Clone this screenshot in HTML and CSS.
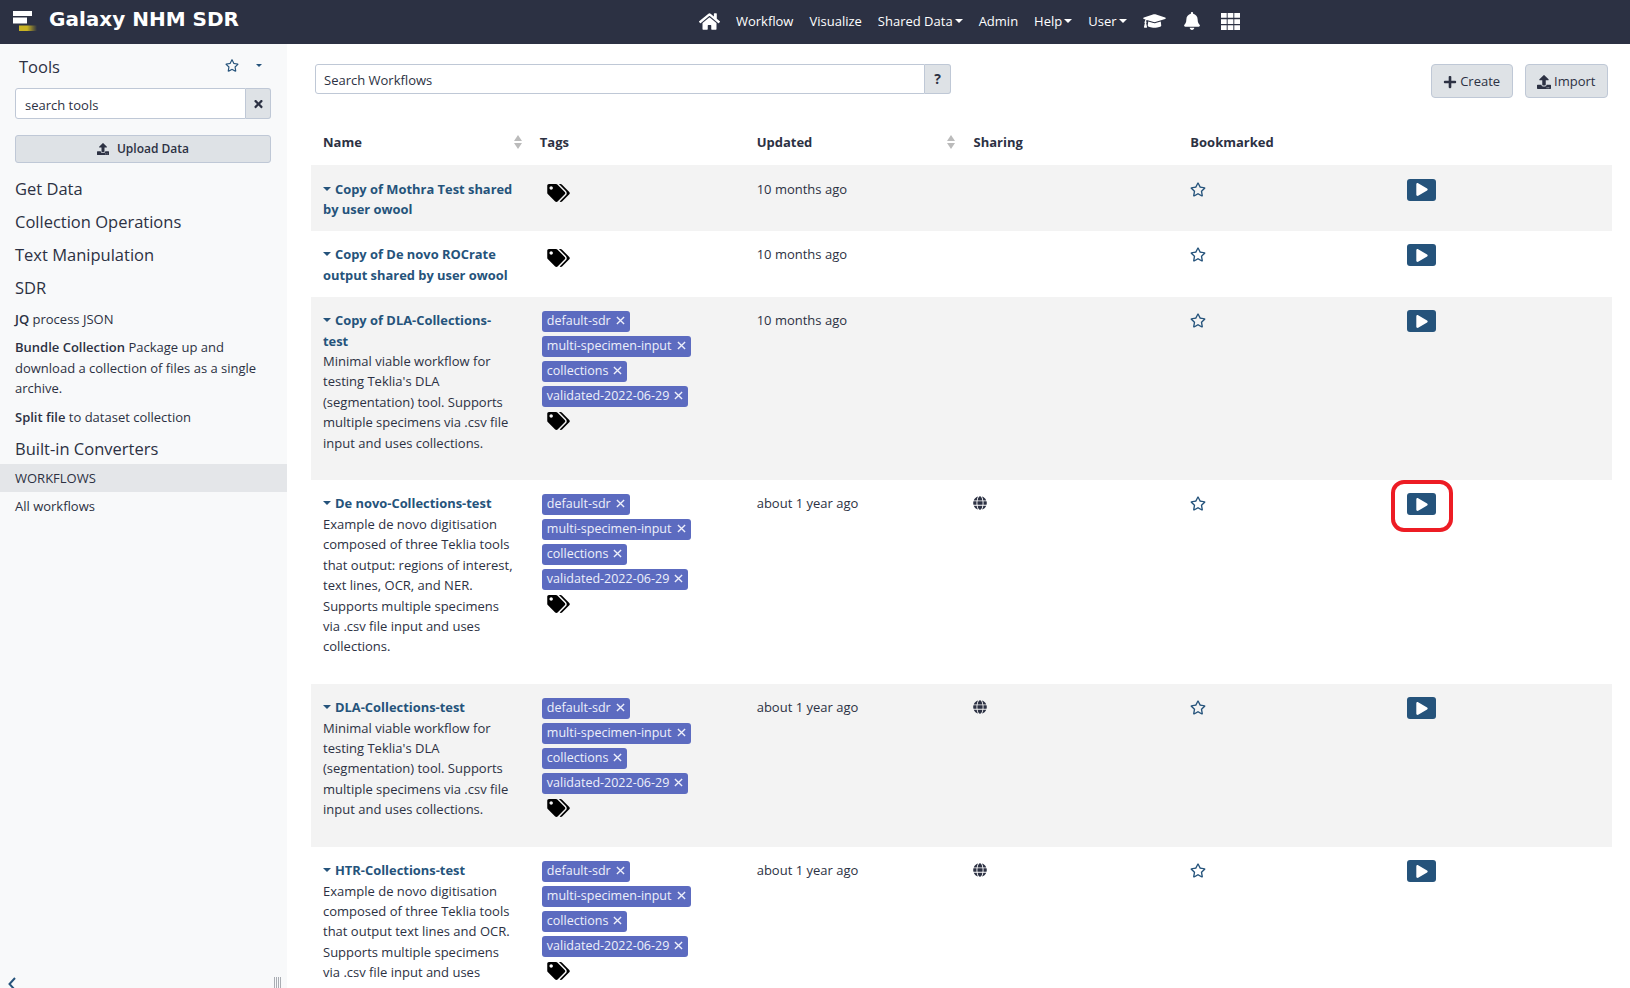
FILE: index.html
```html
<!DOCTYPE html>
<html lang="en">
<head>
    <meta charset="UTF-8">
    <title>Galaxy NHM SDR</title>
    <link rel="stylesheet" href="styles.css">
</head>
<body>

<!-- icon sprite -->
<svg class="sprite" xmlns="http://www.w3.org/2000/svg">
    <symbol id="i-star" viewBox="0 0 576 512"><path d="M528.1 171.5L382 150.2 316.7 17.8c-11.7-23.6-45.6-23.9-57.4 0L194 150.2 47.9 171.5c-26.2 3.8-36.7 36.1-17.7 54.6l105.7 103-25 145.5c-4.5 26.3 23.2 46 46.4 33.7L288 439.6l130.7 68.7c23.2 12.2 50.9-7.4 46.4-33.7l-25-145.5 105.7-103c19-18.5 8.5-50.8-17.7-54.6zM388.6 312.3l23.7 138.4L288 385.4l-124.3 65.3 23.7-138.4-100.6-98 139-20.2 62.2-126 62.2 126 139 20.2-100.6 98z"/></symbol>
    <symbol id="i-tags" viewBox="0 0 640 512"><path d="M497.941 225.941L286.059 14.059A48 48 0 0 0 252.118 0H48C21.49 0 0 21.49 0 48v204.118a48 48 0 0 0 14.059 33.941l211.882 211.882c18.744 18.745 49.136 18.746 67.882 0l204.118-204.118c18.745-18.745 18.745-49.137 0-67.882zM112 160c-26.51 0-48-21.49-48-48s21.49-48 48-48 48 21.49 48 48-21.49 48-48 48zm513.941 133.823L421.823 497.941c-18.745 18.745-49.137 18.745-67.882 0l-.36-.36L527.64 323.522c16.999-16.999 26.36-39.6 26.36-63.64s-9.362-46.641-26.36-63.64L331.397 0h48.721a48 48 0 0 1 33.941 14.059l211.882 211.882c18.745 18.745 18.745 49.137 0 67.882z"/></symbol>
    <symbol id="i-play" viewBox="0 0 448 512"><path d="M424.4 214.7L72.4 6.6C43.8-10.3 0 6.1 0 47.9V464c0 37.5 40.7 60.1 72.4 41.3l352-208c31.4-18.5 31.5-64.1 0-82.6z"/></symbol>
    <symbol id="i-upload" viewBox="0 0 512 512"><path d="M296 384h-80c-13.3 0-24-10.7-24-24V192h-87.7c-17.8 0-26.7-21.5-14.1-34.1L242.3 5.7c7.5-7.5 19.8-7.5 27.3 0l152.2 152.2c12.6 12.6 3.7 34.1-14.1 34.1H320v168c0 13.3-10.7 24-24 24zm216-8v112c0 13.3-10.7 24-24 24H24c-13.3 0-24-10.7-24-24V376c0-13.3 10.7-24 24-24h136v8c0 30.9 25.1 56 56 56h80c30.9 0 56-25.1 56-56v-8h136c13.3 0 24 10.7 24 24zm-124 88c0-11-9-20-20-20s-20 9-20 20 9 20 20 20 20-9 20-20zm64 0c0-11-9-20-20-20s-20 9-20 20 9 20 20 20 20-9 20-20z"/></symbol>
    <symbol id="i-plus" viewBox="0 0 448 512"><path d="M416 208H272V64c0-17.67-14.33-32-32-32h-32c-17.67 0-32 14.33-32 32v144H32c-17.67 0-32 14.33-32 32v32c0 17.67 14.33 32 32 32h144v144c0 17.67 14.33 32 32 32h32c17.67 0 32-14.33 32-32V304h144c17.67 0 32-14.33 32-32v-32c0-17.67-14.33-32-32-32z"/></symbol>
    <symbol id="i-times" viewBox="0 0 352 512"><path d="M242.72 256l100.07-100.07c12.28-12.28 12.28-32.19 0-44.48l-22.24-22.24c-12.28-12.28-32.19-12.28-44.48 0L176 189.28 75.93 89.21c-12.28-12.28-32.19-12.28-44.48 0L9.21 111.45c-12.28 12.28-12.28 32.19 0 44.48L109.28 256 9.21 356.07c-12.28 12.28-12.28 32.19 0 44.48l22.24 22.24c12.28 12.28 32.2 12.28 44.48 0L176 322.72l100.07 100.07c12.28 12.28 32.2 12.28 44.48 0l22.24-22.24c12.28-12.28 12.28-32.19 0-44.48L242.72 256z"/></symbol>
    <symbol id="i-x" viewBox="0 0 10 10"><path d="M1 1l8 8M9 1l-8 8" fill="none" stroke="currentColor" stroke-width="1.500"/></symbol>
    <symbol id="i-bell" viewBox="0 0 448 512"><path d="M224 512c35.32 0 63.97-28.65 63.97-64H160.03c0 35.35 28.65 64 63.97 64zm215.39-149.71c-19.32-20.76-55.47-51.99-55.47-154.29 0-77.7-54.48-139.9-127.94-155.16V32c0-17.67-14.32-32-31.98-32s-31.98 14.33-31.98 32v20.84C118.56 68.1 64.08 130.3 64.08 208c0 102.3-36.15 133.53-55.47 154.29-6 6.45-8.66 14.16-8.61 21.71.11 16.4 12.98 32 32.1 32h383.8c19.12 0 32-15.6 32.1-32 .05-7.55-2.61-15.27-8.61-21.71z"/></symbol>
    <symbol id="i-home" viewBox="0 0 576 512"><path d="M280.37 148.26L96 300.11V464a16 16 0 0 0 16 16l112.06-.29a16 16 0 0 0 15.92-16V368a16 16 0 0 1 16-16h64a16 16 0 0 1 16 16v95.64a16 16 0 0 0 16 16.05L464 480a16 16 0 0 0 16-16V300L295.67 148.26a12.19 12.19 0 0 0-15.3 0zM571.6 251.47L488 182.56V44.05a12 12 0 0 0-12-12h-56a12 12 0 0 0-12 12v72.61L318.47 43a48 48 0 0 0-61 0L4.34 251.47a12 12 0 0 0-1.6 16.9l25.5 31A12 12 0 0 0 45.15 301l235.22-193.74a12.19 12.19 0 0 1 15.3 0L530.9 301a12 12 0 0 0 16.9-1.6l25.5-31a12 12 0 0 0-1.7-16.93z"/></symbol>
    <symbol id="i-cap" viewBox="0 0 640 512"><path d="M622.34 153.2L343.4 67.5c-15.2-4.67-31.6-4.67-46.79 0L17.66 153.2c-23.54 7.23-23.54 38.36 0 45.59l48.63 14.94c-10.67 13.19-17.23 29.28-17.88 46.9C38.78 266.15 32 276.11 32 288c0 10.78 5.68 19.85 13.86 25.65L20.33 428.53C18.11 438.52 25.71 448 35.94 448h56.11c10.24 0 17.84-9.48 15.62-19.47L82.14 313.65C90.32 307.85 96 298.78 96 288c0-11.57-6.47-21.25-15.66-26.87.76-15.02 8.44-28.3 20.69-36.72L296.6 284.5c9.06 2.78 26.44 6.25 46.79 0l278.95-85.7c23.55-7.24 23.55-38.36 0-45.6zM352.79 315.09c-28.53 8.76-52.84 3.92-65.59 0l-145.02-44.55L128 384c0 35.35 85.96 64 192 64s192-28.65 192-64l-14.18-113.47-145.03 44.56z"/></symbol>
    <symbol id="i-grid" viewBox="0 0 20 20"><path d="M0 1h6v5H0zM7 1h6v5H7zM14 1h6v5h-6zM0 7.500h6v5H0zM7 7.500h6v5H7zM14 7.500h6v5h-6zM0 14h6v5H0zM7 14h6v5H7zM14 14h6v5h-6z"/></symbol>
    <symbol id="i-globe" viewBox="0 0 496 512"><path d="M336.500 160C322 70.700 287.800 8 248 8s-74 62.700-88.500 152h177zM152 256c0 22.200 1.200 43.500 3.300 64h185.300c2.100-20.500 3.300-41.800 3.300-64s-1.200-43.500-3.300-64H155.300c-2.100 20.500-3.300 41.800-3.300 64zm324.700-96c-28.600-67.900-86.500-120.400-158-141.600 24.400 33.800 41.200 84.700 50 141.600h108zM177.200 18.400C105.800 39.600 47.800 92.100 19.300 160h108c8.700-56.900 25.500-107.800 49.900-141.600zM487.400 192H372.700c2.100 21 3.300 42.500 3.300 64s-1.200 43-3.300 64h114.600c5.500-20.500 8.600-41.800 8.600-64s-3.100-43.500-8.500-64zM120 256c0-21.500 1.200-43 3.300-64H8.600C3.200 212.500 0 233.800 0 256s3.200 43.500 8.600 64h114.600c-2-21-3.200-42.500-3.200-64zm39.500 96c14.500 89.300 48.700 152 88.500 152s74-62.700 88.500-152h-177zm159.300 141.600c71.400-21.200 129.400-73.700 158-141.600h-108c-8.800 56.900-25.600 107.800-50 141.600zM19.300 352c28.600 67.900 86.500 120.400 158 141.600-24.400-33.800-41.200-84.700-50-141.600h-108z"/></symbol>
</svg>

<header class="masthead">
    <a class="brand">
        <svg class="brand-logo" viewBox="0 0 24 21">
            <defs>
                <linearGradient id="logoFade"><stop offset="0.45" stop-color="#c9b322"/><stop offset="1" stop-color="#c9b322" stop-opacity="0"/></linearGradient>
            </defs>
            <rect x="0" y="0" width="19" height="5" fill="#fff"/>
            <rect x="0" y="6.500" width="14" height="6" fill="#fff"/>
            <rect x="6" y="14.500" width="18" height="5.500" fill="url(#logoFade)"/>
        </svg>
        Galaxy NHM SDR
    </a>
    <nav class="topnav">
        <a class="nav-icon"><svg class="icon home"><use href="#i-home"/></svg></a>
        <a>Workflow</a>
        <a>Visualize</a>
        <a class="dropdown">Shared Data</a>
        <a>Admin</a>
        <a class="dropdown">Help</a>
        <a class="dropdown">User</a>
        <a class="nav-icon"><svg class="icon cap"><use href="#i-cap"/></svg></a>
        <a class="nav-icon nav-bell"><svg class="icon bell"><use href="#i-bell"/></svg></a>
        <a class="nav-icon nav-grid"><svg class="icon grid"><use href="#i-grid"/></svg></a>
    </nav>
</header>

<div class="layout">
    <aside class="sidebar">
        <div class="tools-head">
            <span class="tools-title">Tools</span>
            <svg class="icon tools-star"><use href="#i-star"/></svg>
            <span class="caret tools-caret"></span>
        </div>
        <div class="tool-search">
            <div class="tool-search-text">search tools</div>
            <div class="tool-search-clear"><svg class="icon"><use href="#i-times"/></svg></div>
        </div>
        <button class="upload-btn"><svg class="icon"><use href="#i-upload"/></svg>Upload Data</button>

        <div class="section">Get Data</div>
        <div class="section">Collection Operations</div>
        <div class="section">Text Manipulation</div>
        <div class="section">SDR</div>
        <div class="tool first-tool"><b>JQ</b> process JSON</div>
        <div class="tool"><b>Bundle Collection</b> Package up and download a collection of files as a single archive.</div>
        <div class="tool"><b>Split file</b> to dataset collection</div>
        <div class="section after-tools">Built-in Converters</div>
        <div class="label">WORKFLOWS</div>
        <div class="tool all-workflows">All workflows</div>

        <div class="sidebar-foot">
            <svg class="collapse" viewBox="0 0 8 14"><path d="M7 1L1.500 7 7 13" fill="none" stroke="#25537b" stroke-width="2"/></svg>
            <span class="drag-handle"></span>
        </div>
    </aside>

    <main class="center">
        <div class="toolbar">
            <div class="search-group">
                <div class="search-input">Search Workflows</div>
                <div class="search-help">?</div>
            </div>
            <div class="actions">
                <button class="btn"><svg class="icon"><use href="#i-plus"/></svg>Create</button>
                <button class="btn"><svg class="icon"><use href="#i-upload"/></svg>Import</button>
            </div>
        </div>

        <table class="workflows">
            <thead>
                <tr>
                    <th class="sortable">Name</th>
                    <th>Tags</th>
                    <th class="sortable">Updated</th>
                    <th>Sharing</th>
                    <th>Bookmarked</th>
                    <th></th>
                </tr>
            </thead>
            <tbody>
                <tr>
                    <td><a class="wf-name">Copy of Mothra Test shared by user owool</a></td>
                    <td><svg class="icon tags-icon"><use href="#i-tags"/></svg></td>
                    <td>10 months ago</td>
                    <td></td>
                    <td><svg class="icon star"><use href="#i-star"/></svg></td>
                    <td><button class="run"><svg class="icon"><use href="#i-play"/></svg></button></td>
                </tr>
                <tr>
                    <td><a class="wf-name">Copy of De novo ROCrate output shared by user owool</a></td>
                    <td><svg class="icon tags-icon"><use href="#i-tags"/></svg></td>
                    <td>10 months ago</td>
                    <td></td>
                    <td><svg class="icon star"><use href="#i-star"/></svg></td>
                    <td><button class="run"><svg class="icon"><use href="#i-play"/></svg></button></td>
                </tr>
                <tr>
                    <td>
                        <a class="wf-name">Copy of DLA-Collections-test</a>
                        <p>Minimal viable workflow for testing Teklia's DLA (segmentation) tool. Supports multiple specimens via .csv file input and uses collections.</p>
                    </td>
                    <td>
                        <span class="tag">default-sdr<svg class="icon"><use href="#i-x"/></svg></span>
                        <span class="tag">multi-specimen-input<svg class="icon"><use href="#i-x"/></svg></span>
                        <span class="tag">collections<svg class="icon"><use href="#i-x"/></svg></span>
                        <span class="tag">validated-2022-06-29<svg class="icon"><use href="#i-x"/></svg></span>
                        <svg class="icon tags-icon"><use href="#i-tags"/></svg>
                    </td>
                    <td>10 months ago</td>
                    <td></td>
                    <td><svg class="icon star"><use href="#i-star"/></svg></td>
                    <td><button class="run"><svg class="icon"><use href="#i-play"/></svg></button></td>
                </tr>
                <tr>
                    <td>
                        <a class="wf-name">De novo-Collections-test</a>
                        <p>Example de novo digitisation composed of three Teklia tools that output: regions of interest, text lines, OCR, and NER. Supports multiple specimens via .csv file input and uses collections.</p>
                    </td>
                    <td>
                        <span class="tag">default-sdr<svg class="icon"><use href="#i-x"/></svg></span>
                        <span class="tag">multi-specimen-input<svg class="icon"><use href="#i-x"/></svg></span>
                        <span class="tag">collections<svg class="icon"><use href="#i-x"/></svg></span>
                        <span class="tag">validated-2022-06-29<svg class="icon"><use href="#i-x"/></svg></span>
                        <svg class="icon tags-icon"><use href="#i-tags"/></svg>
                    </td>
                    <td>about 1 year ago</td>
                    <td><svg class="icon globe"><use href="#i-globe"/></svg></td>
                    <td><svg class="icon star"><use href="#i-star"/></svg></td>
                    <td class="run-cell"><button class="run"><svg class="icon"><use href="#i-play"/></svg></button><span class="highlight"></span></td>
                </tr>
                <tr>
                    <td>
                        <a class="wf-name">DLA-Collections-test</a>
                        <p>Minimal viable workflow for testing Teklia's DLA (segmentation) tool. Supports multiple specimens via .csv file input and uses collections.</p>
                    </td>
                    <td>
                        <span class="tag">default-sdr<svg class="icon"><use href="#i-x"/></svg></span>
                        <span class="tag">multi-specimen-input<svg class="icon"><use href="#i-x"/></svg></span>
                        <span class="tag">collections<svg class="icon"><use href="#i-x"/></svg></span>
                        <span class="tag">validated-2022-06-29<svg class="icon"><use href="#i-x"/></svg></span>
                        <svg class="icon tags-icon"><use href="#i-tags"/></svg>
                    </td>
                    <td>about 1 year ago</td>
                    <td><svg class="icon globe"><use href="#i-globe"/></svg></td>
                    <td><svg class="icon star"><use href="#i-star"/></svg></td>
                    <td><button class="run"><svg class="icon"><use href="#i-play"/></svg></button></td>
                </tr>
                <tr>
                    <td>
                        <a class="wf-name">HTR-Collections-test</a>
                        <p>Example de novo digitisation composed of three Teklia tools that output text lines and OCR. Supports multiple specimens via .csv file input and uses collections.</p>
                    </td>
                    <td>
                        <span class="tag">default-sdr<svg class="icon"><use href="#i-x"/></svg></span>
                        <span class="tag">multi-specimen-input<svg class="icon"><use href="#i-x"/></svg></span>
                        <span class="tag">collections<svg class="icon"><use href="#i-x"/></svg></span>
                        <span class="tag">validated-2022-06-29<svg class="icon"><use href="#i-x"/></svg></span>
                        <svg class="icon tags-icon"><use href="#i-tags"/></svg>
                    </td>
                    <td>about 1 year ago</td>
                    <td><svg class="icon globe"><use href="#i-globe"/></svg></td>
                    <td><svg class="icon star"><use href="#i-star"/></svg></td>
                    <td><button class="run"><svg class="icon"><use href="#i-play"/></svg></button></td>
                </tr>
            </tbody>
        </table>
    </main>
</div>

</body>
</html>
```

FILE: styles.css
```css
* {
    margin: 0;
    padding: 0;
    box-sizing: border-box;
}

body {
    font-family: 'Open Sans', 'Noto Sans', sans-serif;
    font-size: 13px;
    line-height: 20.4px;
    color: #2c3143;
    background: #fff;
    height: 100vh;
    overflow: hidden;
    display: flex;
    flex-direction: column;
}

button {
    font: inherit;
    color: inherit;
}

.sprite {
    display: none;
}

.icon {
    display: inline-block;
    width: 14px;
    height: 14px;
    fill: currentColor;
    flex: none;
}

.caret {
    display: inline-block;
    border-top: 4px solid currentColor;
    border-left: 4px solid transparent;
    border-right: 4px solid transparent;
}

/* Masthead */
.masthead {
    height: 44px;
    flex: none;
    background: #2c3143;
    color: #fff;
    display: flex;
    align-items: center;
}

.brand {
    display: flex;
    align-items: center;
    gap: 12px;
    padding-left: 13px;
    padding-bottom: 5px;
    font-family: 'DejaVu Sans', sans-serif;
    font-size: 20px;
    font-weight: bold;
}

.brand-logo {
    width: 24px;
    height: 21px;
    margin-top: 3px;
}

.topnav {
    display: flex;
    align-items: center;
    margin-left: 452px;
    padding-bottom: 2px;
    height: 100%;
}

.topnav a {
    padding: 0 8px;
    white-space: nowrap;
}

.topnav .dropdown::after {
    content: "";
    display: inline-block;
    margin-left: 2px;
    vertical-align: 3px;
    border-top: 4px solid #fff;
    border-left: 4px solid transparent;
    border-right: 4px solid transparent;
}

.nav-icon {
    display: flex;
    align-items: center;
}

.topnav .nav-bell {
    margin-left: 2px;
}

.topnav .nav-grid {
    margin-left: 5px;
}

.icon.home { width: 21px; height: 19px; }
.icon.cap { width: 23px; height: 18px; }
.icon.bell { width: 16px; height: 18px; }
.icon.grid { width: 19px; height: 19px; }

/* Sidebar */
.layout {
    flex: 1;
    display: flex;
    min-height: 0;
}

.sidebar {
    width: 287px;
    flex: none;
    background: #f8f9fa;
    display: flex;
    flex-direction: column;
}

.tools-head {
    display: flex;
    align-items: center;
    padding: 3px 25px 0 19px;
    height: 44px;
}

.tools-title {
    flex: 1;
    font-size: 16.500px;
}

.tools-star {
    width: 14px;
    height: 13px;
    color: #25537b;
    margin-right: 17px;
    margin-top: -4px;
}

.tools-caret {
    color: #25537b;
    border-width: 3px 3px 0;
    margin-top: -4px;
}

.tool-search {
    display: flex;
    height: 31px;
    margin: 0 16px 0 15px;
}

.tool-search-text {
    flex: 1;
    padding: 6px 9px;
    background: #fff;
    border: 1px solid #bfc8d6;
    border-radius: 3px 0 0 3px;
}

.tool-search-clear {
    width: 25px;
    display: flex;
    align-items: center;
    justify-content: center;
    background: #dee2e6;
    border: 1px solid #bfc8d6;
    border-left: none;
    border-radius: 0 3px 3px 0;
}

.tool-search-clear .icon {
    width: 11px;
    height: 12px;
}

.upload-btn {
    height: 28px;
    margin: 16px 16px 0 15px;
    display: flex;
    align-items: center;
    justify-content: center;
    gap: 8px;
    background: #dee2e6;
    border: 1px solid #bfc8d6;
    border-radius: 3px;
    font-size: 12px;
    font-weight: 600;
}

.upload-btn .icon {
    width: 12px;
    height: 12px;
}

.section {
    font-size: 16.500px;
    font-weight: 500;
    line-height: 25px;
    margin: 8px 15px 0;
}

.upload-btn + .section {
    margin-top: 13px;
}

.section.after-tools {
    margin-top: 9px;
}

.tool {
    margin: 8px 15px 0;
}

.tool.first-tool {
    margin-top: 9px;
}

.tool b {
    font-weight: 600;
}

.label {
    margin-top: 3px;
    height: 28px;
    line-height: 28px;
    padding-left: 15px;
    background: #e4e6e9;
}

.tool.all-workflows {
    margin-top: 4px;
}

.sidebar-foot {
    margin-top: auto;
    height: 11px;
    overflow: hidden;
    display: flex;
    justify-content: space-between;
    padding: 0 6px 0 8px;
}

.collapse {
    width: 8px;
    height: 14px;
    flex: none;
}

.drag-handle {
    width: 7px;
    height: 11px;
    background: repeating-linear-gradient(90deg, #a9adb3 0 1px, transparent 1px 2px);
}

/* Center panel */
.center {
    flex: 1;
    min-width: 0;
    padding: 20px 18px 0 24px;
}

.toolbar {
    display: flex;
    justify-content: space-between;
    align-items: flex-start;
    padding: 0 4px;
}

.search-group {
    display: flex;
    width: 636px;
    height: 30px;
}

.search-input {
    flex: 1;
    padding: 5px 8px;
    border: 1px solid #bfc8d6;
    border-radius: 3px 0 0 3px;
}

.search-help {
    width: 26px;
    text-align: center;
    line-height: 27px;
    font-size: 14px;
    font-weight: bold;
    background: #dee2e6;
    border: 1px solid #bfc8d6;
    border-left: none;
    border-radius: 0 3px 3px 0;
}

.actions {
    display: flex;
    gap: 12px;
}

.btn {
    height: 34px;
    padding: 1px 11.500px 0;
    display: flex;
    align-items: center;
    gap: 3px;
    background: #dee2e6;
    border: 1px solid #bfc8d6;
    border-radius: 4px;
    font-size: 13px;
}

.workflows {
    width: 100%;
    table-layout: fixed;
    border-collapse: collapse;
    margin-top: 10px;
}

.workflows th {
    height: 57px;
    padding: 12px 12px 0;
    text-align: left;
    font-weight: 700;
    position: relative;
}

/* sort arrows on the right of the header cell */
.sortable::before,
.sortable::after {
    content: "";
    position: absolute;
    right: 6px;
    border-left: 4.500px solid transparent;
    border-right: 4.500px solid transparent;
}

.sortable::before {
    top: 27px;
    border-bottom: 6px solid #bbb;
}

.sortable::after {
    top: 35px;
    border-top: 6px solid #bbb;
}

.workflows td {
    padding: 13.500px 12px 11.500px;
    vertical-align: top;
}

.workflows tbody tr:nth-child(odd) {
    background: #f3f3f3;
}

.workflows p {
    margin-bottom: 15.500px;
}

.wf-name {
    font-size: 12.900px;
    font-weight: 700;
    color: #25537b;
}

.wf-name::before {
    content: "";
    display: inline-block;
    margin-right: 4px;
    vertical-align: 3px;
    border-top: 4px solid #25537b;
    border-left: 4px solid transparent;
    border-right: 4px solid transparent;
}

.tag {
    display: block;
    width: fit-content;
    height: 21px;
    font-size: 12.500px;
    line-height: 20px;
    margin: 1px 0 4px 2px;
    padding: 0 5px;
    background: #5c6bc0;
    color: #eef0fb;
    border-radius: 3px;
    white-space: nowrap;
}

.tag .icon {
    width: 9px;
    height: 9px;
    margin-left: 5px;
}

.tags-icon {
    display: block;
    width: 23px;
    height: 18px;
    color: #000;
    margin: 5px 0 0 7px;
}

.star {
    width: 16px;
    height: 15px;
    color: #25537b;
    margin-top: 3px;
    display: block;
}

.globe {
    width: 14px;
    height: 14px;
    display: block;
    margin-top: 3px;
}

.run {
    display: flex;
    align-items: center;
    justify-content: center;
    width: 29px;
    height: 22px;
    background: #25537b;
    color: #fff;
    border: none;
    border-radius: 3px;
}

.run .icon {
    width: 12px;
    height: 13px;
}

.run-cell {
    position: relative;
}

/* red annotation drawn around the run button */
.highlight {
    position: absolute;
    left: -4px;
    top: 0;
    width: 62px;
    height: 52px;
    border: 4px solid #ed1c24;
    border-radius: 13px;
}
```
